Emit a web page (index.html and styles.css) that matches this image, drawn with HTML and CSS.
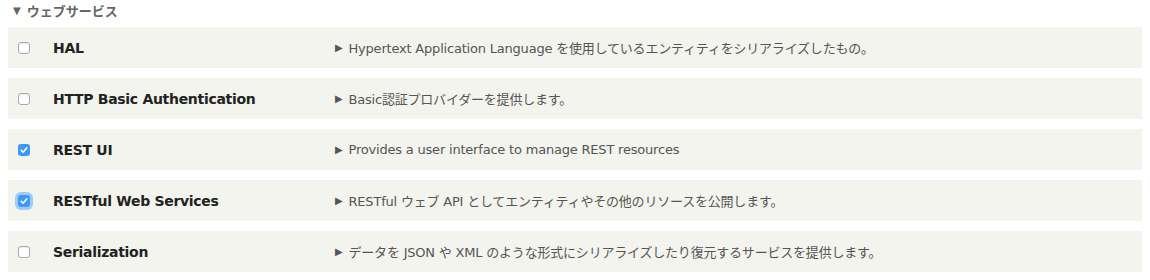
FILE: index.html
```html
<!DOCTYPE html>
<html lang="ja">
<head>
<meta charset="utf-8">
<link rel="stylesheet" href="styles.css">
</head>
<body>
<div class="package">
  <div class="summary"><span class="tri">▼</span>ウェブサービス</div>
  <div class="list">
    <div class="row">
      <span class="cb"></span>
      <span class="name">HAL</span>
      <span class="desc"><span class="tri-r">▶</span>Hypertext Application Language を使用しているエンティティをシリアライズしたもの。</span>
    </div>
    <div class="row">
      <span class="cb"></span>
      <span class="name">HTTP Basic Authentication</span>
      <span class="desc"><span class="tri-r">▶</span>Basic認証プロバイダーを提供します。</span>
    </div>
    <div class="row">
      <span class="cb checked"><svg viewBox="0 0 12 12" width="12" height="12"><path d="M3.2 6.3 L5.1 8.2 L8.9 3.8" fill="none" stroke="#fff" stroke-width="1.6" stroke-linecap="round" stroke-linejoin="round"/></svg></span>
      <span class="name">REST UI</span>
      <span class="desc"><span class="tri-r">▶</span>Provides a user interface to manage REST resources</span>
    </div>
    <div class="row">
      <span class="cb checked focus"><svg viewBox="0 0 12 12" width="12" height="12"><path d="M3.2 6.3 L5.1 8.2 L8.9 3.8" fill="none" stroke="#fff" stroke-width="1.6" stroke-linecap="round" stroke-linejoin="round"/></svg></span>
      <span class="name">RESTful Web Services</span>
      <span class="desc"><span class="tri-r">▶</span>RESTful ウェブ API としてエンティティやその他のリソースを公開します。</span>
    </div>
    <div class="row">
      <span class="cb"></span>
      <span class="name">Serialization</span>
      <span class="desc"><span class="tri-r">▶</span>データを JSON や XML のような形式にシリアライズしたり復元するサービスを提供します。</span>
    </div>
  </div>
</div>
</body>
</html>
```

FILE: styles.css
```css
html, body {
  margin: 0;
  padding: 0;
  background: #fff;
}
body {
  font-family: "DejaVu Sans", "Noto Sans CJK JP", sans-serif;
  color: #222;
}
.package {
  padding: 1px 8px 0 8px;
  width: 1134px;
}
.summary {
  display: flex;
  align-items: center;
  height: 18px;
  padding-left: 5px;
  font-size: 13px;
  font-weight: bold;
  color: #666;
}
.summary .tri {
  font-size: 10px;
  margin-right: 6px;
  font-weight: normal;
}
.list {
  margin-top: 8px;
  display: flex;
  flex-direction: column;
  gap: 10px;
}
.row {
  display: flex;
  align-items: center;
  height: 41px;
  background: #f3f4ee;
}
.cb {
  flex: none;
  box-sizing: border-box;
  width: 12px;
  height: 12px;
  margin-left: 10px;
  border: 1px solid #a9a9a9;
  border-radius: 3px;
  background: #fff;
  box-shadow: inset 0 1px 1px rgba(0,0,0,0.08);
  display: flex;
}
.cb.checked {
  border: none;
  background: #3b99fc;
  box-shadow: none;
}
.cb.focus {
  box-shadow: 0 0 0 3px rgba(59,153,252,0.45);
}
.cb svg {
  display: block;
}
.name {
  flex: none;
  width: 282px;
  margin-left: 23px;
  font-size: 14px;
  letter-spacing: -0.3px;
  font-weight: bold;
  color: #222;
}
.desc {
  font-size: 13px;
  letter-spacing: -0.2px;
  color: #555;
  display: flex;
  align-items: center;
}
.tri-r {
  font-size: 10px;
  margin-right: 6px;
}
```
